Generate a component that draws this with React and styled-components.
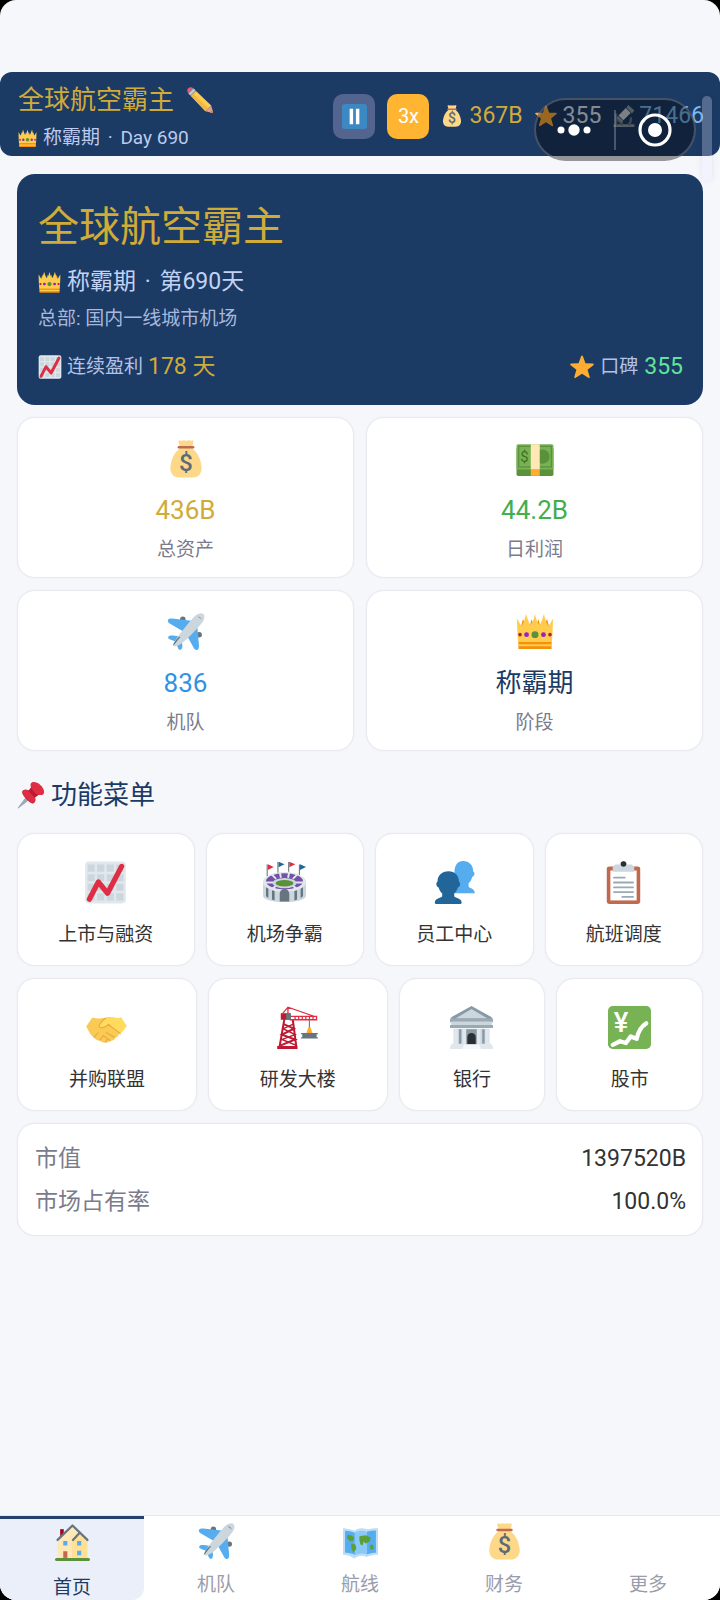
import React from 'react';
import styled, { createGlobalStyle, css } from 'styled-components';

const color = {
  page: '#f6f7fb',
  navy: '#1b3a64',
  gold: '#d0ab38',
  green: '#43ae50',
  blue: '#2f92e4',
  mint: '#5fe59a',
  pale: '#bccbef',
  muted: '#7a7b8d',
  ink: '#333333',
  line: '#e9eaef',
};

const GlobalStyle = createGlobalStyle`
  *, *::before, *::after { box-sizing: border-box; }
  html { background: #000; }
  body { margin: 0; font-family: Roboto, 'Noto Sans CJK SC', sans-serif; color: ${color.ink}; }
  h1, h2, p, dl, dt, dd { margin: 0; font-weight: 400; }
  button { font: inherit; color: inherit; border: 0; padding: 0; background: none; cursor: pointer; }
`;

/* ---------- icons ---------- */

const Svg = styled.svg`
  display: block;
  flex: none;
  width: ${(p) => p.$size}px;
  height: ${(p) => p.$size}px;
`;

const glyphs = {
  crown: (
    <>
      <path fill="#f4900c" d="M3 20 6.500 6 9 10 13 14 14.500 6 18 13 21.500 6 23 14 27 10 29.500 6 33 20z" />
      <path fill="#ffcc4d" d="M1 5.500C2.500 7.500 3.700 11 5.500 12.500 7.500 9 8.500 5 9.500 1c1.300 3.500 2.300 8 4.300 10.500C15.800 9 17.200 5 18 1c.8 4 2.200 8 4.200 10.500C24.200 9 25.200 4.500 26.500 1c1 4 2 8 4 11.500C32.300 11 33.500 7.500 35 5.500 35 13 34.500 22 34 28H2C1.500 22 1 13 1 5.500z" />
      <path fill="#f4900c" d="M2.300 27.500h31.400v6.500H2.300z" />
      <path fill="#ffcc4d" d="M2.300 29.500h31.400v2H2.300z" />
      <circle cx="18" cy="20.500" r="3.300" fill="#5c913b" />
      <circle cx="10" cy="20.500" r="2.300" fill="#9224c4" />
      <circle cx="26" cy="20.500" r="2.300" fill="#9224c4" />
      <circle cx="3.800" cy="20.500" r="1.700" fill="#be1931" />
      <circle cx="32.200" cy="20.500" r="1.700" fill="#be1931" />
    </>
  ),
  bag: (
    <>
      <path fill="#fdd888" d="M12 6 10.800 1.200c0-1.100 1.500-.9 2.700-.5C14.700 1 15 .4 16 .3s1.300.7 2.300.5c1-.1 1.700-.8 2.600-.5s1.300.6 2.300.3c1.100-.3 2.200-.3 2 .7L24 6v2c5 4 8 10 8.800 17.500.4 6-3 10-8.600 10H11.800c-5.600 0-9-4-8.600-10C4 18 7 12 12 8z" />
      <path fill="#bf6952" d="M11.200 5.700h13.600a1.150 1.150 0 0 1 0 2.300H11.200a1.150 1.150 0 0 1 0-2.300z" />
      <text x="18" y="29.500" textAnchor="middle" fontFamily="Roboto, sans-serif" fontSize="23" fontWeight="500" fill="#5f6b74">$</text>
    </>
  ),
  cash: (
    <>
      <rect x="0.500" y="7" width="35" height="27" rx="1.500" fill="#5c913b" />
      <rect x="0.500" y="4" width="35" height="24" rx="1.500" fill="#77b255" />
      <rect x="2.500" y="6" width="31" height="19.500" fill="none" stroke="#5c913b" strokeWidth="1.200" />
      <circle cx="25" cy="15.800" r="6.800" fill="#5c913b" />
      <path fill="#ffe8b6" d="M14 4h8.500v24H14z" />
      <path fill="#ffac33" d="M14 28h8.500v6H14z" />
      <text x="8" y="21" textAnchor="middle" fontFamily="Roboto, sans-serif" fontSize="14" fill="#3e721d">$</text>
    </>
  ),
  plane: (
    <>
      <circle cx="15" cy="6" r="2.600" fill="#66757f" />
      <circle cx="30.500" cy="20.500" r="2.600" fill="#66757f" />
      <path fill="#55acee" d="M1 6.500c.5-.9 2-1.300 4-1.200L25 7.500l-9.500 10L2.500 10C1 9 .4 7.600 1 6.500zM29 34.800c.9-.5 1.400-2 1.300-4L28.500 11l-10 9.500 7 12.800c1 1.500 2.400 2.100 3.500 1.500zM1.200 22.600c.8-1.200 2.500-1.500 4.600-1.200L14 22.600l-4 5.200-7-2.600c-1.500-.6-2.300-1.700-1.800-2.600zM13.200 34.700c1.200-.8 1.600-2.500 1.300-4.600L13 22.500l-5 4 2.400 6.600c.6 1.500 1.800 2.100 2.800 1.600z" />
      <path fill="#ccd6dd" d="M34.500.9c1.500 1.500 1.200 4.800-.8 7.700-2.400 3.600-14 15.900-18.800 19.400-3.200 2.300-6.900 4.500-8.300 3.300-1.300-1.300.9-5.100 3.300-8.300C13.300 18.200 23 6 26.700 2.600 29.500.2 33-.6 34.500.9z" />
      <path fill="#66757f" d="M5.500 31.200c.3-2 2.500-5.700 6-8.600.7-.5 1.300.2.700.8-2.700 2.800-4.400 6-6.700 7.800zM29 3.600c1.500-.5 3.500.9 3.600 2.900-.7-1.300-2-2.300-3.600-2.900z" />
    </>
  ),
  chart: (
    <>
      <rect x="1" y="0.500" width="34" height="35" rx="3" fill="#e1e8ed" />
      <path fill="#ccd6dd" d="M3 3h6v6H3zm8 0h6v6h-6zm8 0h6v6h-6zm8 0h6v6h-6zM3 11h6v6H3zm8 0h6v6h-6zm8 0h6v6h-6zm8 0h6v6h-6zM3 19h6v6H3zm8 0h6v6h-6zm8 0h6v6h-6zm8 0h6v6h-6zM3 27h6v6H3zm8 0h6v6h-6zm8 0h6v6h-6zm8 0h6v6h-6z" />
      <path fill="none" stroke="#dd2e44" strokeWidth="4.400" strokeLinecap="round" strokeLinejoin="round" d="M4.500 32 12 17.500l7.700 9.500L31.500 4.500" />
    </>
  ),
  star: (
    <path fill="#ffac33" d="M18 .8c.7 0 1.200.6 1.500 1.300l3.700 10.400 10.900.3c1.700.1 2.100 1.500.9 2.500l-8.600 6.700 3.100 10.700c.5 1.700-.7 2.600-2.100 1.600L18 28.100l-9.400 6.200c-1.400 1-2.600.1-2.100-1.600l3.100-10.700L1 15.300c-1.200-1-.8-2.400.9-2.500l10.900-.3 3.700-10.400C16.800 1.400 17.300.8 18 .8z" />
  ),
  pencil: (
    <>
      <path fill="#ea596e" d="M1.500 8.500 8.500 1.500 5.700.4C3-.4-.4 3 .4 5.700z" />
      <path fill="#99aab5" d="m1.500 8.500 7-7 4 4-7 7z" />
      <path fill="#ccd6dd" d="m2.800 9.800 7-7 1.300 1.300-7 7z" />
      <path fill="#ffcc4d" d="m5.500 12.500 7-7 21 20-8 8z" />
      <path fill="#f2b844" d="m5.500 12.500 3.300-3.300 20.800 20.300-4.100 4z" />
      <path fill="#e39f87" d="m25.500 33.500 8-8 2.300 8.500c.3 1.300-.6 2-1.800 1.800z" />
      <path fill="#c98571" d="m35.200 31.500.7 3c.2.900-.5 1.500-1.400 1.400l-3-.7z" />
    </>
  ),
  pause: (
    <>
      <rect width="36" height="36" rx="4" fill="#3b88c3" />
      <path fill="#fff" d="M11 7h5v22h-5zm9 0h5v22h-5z" />
    </>
  ),
  microscope: (
    <>
      <path fill="#8899a6" d="M1 31.500h34V36H1z" />
      <path fill="none" stroke="#66757f" strokeWidth="4" d="M5 14v19M4 20l12 12M29 20c1 5 0 9-4 13" />
      <path fill="#ccd6dd" d="m9 17 12-12 8 8-12 12z" />
      <path fill="#8899a6" d="m22 4 3-4 10 9-4 5zM8 18l9 8-3 3-8-8z" />
    </>
  ),
  pin: (
    <>
      <path fill="#99aab5" d="M12.500 19 1 34.300c-.4.800.3 1.300 1 .8L17 23.500z" />
      <path fill="#be1931" d="M7 13.200C9 10.500 13 11 16 13l6 6.500c2 3.500 2 7-.6 9-2.200 1.300-5.400-1-8.700-4.600C9 20 5.600 16 7 13.200z" />
      <path fill="#dd2e44" d="M7.300 12.500c2.500-2 5.900-1.300 8.600.5l6.500 6.700c2 3 2 6-.2 8-2.900 1-6-1.500-9.300-5-3.500-3.500-6.600-7-5.600-10.200z" />
      <path fill="#be1931" d="m14.500 13 5-7 10.500 10-7 5.500z" />
      <path fill="#dd2e44" d="M18 3C20 .4 25 .7 30 5c5 4.600 6 10 3.500 12.200-2.500 2-7.500.8-11.500-3.200C18 10 16.400 5.500 18 3z" />
    </>
  ),
  arena: (
    <>
      <path fill="none" stroke="#66757f" strokeWidth="0.900" d="M3.500 13V3M12.500 10V.800M21.500 10V.800M30.500 13V3" />
      <path fill="#dd2e44" d="m4 2.800 5 2.300-5 2.500zM22 .6l5 2.200-5 2.500z" />
      <path fill="#226699" d="m13 .6 5 2.200-5 2.500zM31 2.800l5 2.300-5 2.500z" />
      <path fill="#ccd6dd" d="M0 17h36v12c0 7-36 7-36 0z" />
      <ellipse cx="18" cy="17.500" rx="18" ry="8.300" fill="#e1e8ed" />
      <ellipse cx="18" cy="17" rx="15.500" ry="6.800" fill="#7450a8" />
      <path stroke="#e1e8ed" strokeWidth="1.600" d="m7 11 4 4m3-6 1 5m14-3-4 4m-3-6-1 5M2 18l7 0m25 0-7 0M8 23l4-3m16 3-4-3" />
      <ellipse cx="18" cy="18.500" rx="10" ry="4.300" fill="#ccd6dd" />
      <ellipse cx="18" cy="18.700" rx="7.500" ry="2.700" fill="#5c913b" />
      <path fill="#66757f" d="M14 34v-6c0-6 8-6 8 0v6zM2.500 22l2 1.200V31l-2-1.400zm5 2.500 2.200.7V33l-2.200-.7zm26-2.500-2 1.200V31l2-1.400zm-5 2.500-2.200.7V33l2.200-.7z" />
    </>
  ),
  people: (
    <>
      <path fill="#55acee" d="M25 0c5.500 0 8.600 3.700 8.600 8.300 0 .5 1.300.8 1.100 2.400-.2 1.500-.9 2.500-1.900 2.700-.8 2.800-1.800 4.100-3 5.300v2.500c0 1.700 5.200 1.500 5.200 5.800H18V8c.5-5 3-8 7-8z" />
      <path fill="#226699" d="M13 8.500c5.500 0 8.700 3.800 8.700 8.500 0 .6 1.200.8 1 2.400-.2 1.500-.9 2.500-1.900 2.700-.7 2.400-1.700 3.900-3 5v2.200c0 2 6.200 1.300 6.200 5.700 0 .6-.4 1-1 1H2.500c-.6 0-1-.4-1-1 0-4.400 6.200-3.700 6.200-5.700v-2.200c-1.300-1.100-2.300-2.600-3-5-1-.2-1.700-1.200-1.900-2.700-.2-1.600 1-1.800 1-2.400 0-4.700 3.400-8.500 9.200-8.500z" />
    </>
  ),
  clipboard: (
    <>
      <rect x="4" y="4.500" width="28" height="31.500" rx="2" fill="#c1694f" />
      <path fill="#fff" d="M7 8h22v25H7z" />
      <path fill="#ccd6dd" d="M11 3h4c0-4 6-4 6 0h4l2 2v4H9V5z" />
      <circle cx="18" cy="2.600" r="2.300" fill="#292f33" />
      <path stroke="#99aab5" strokeWidth="1.500" strokeLinecap="round" d="M10 14h9M10 18h16M10 22h16M10 26h16M17 30h9" />
    </>
  ),
  handshake: (
    <g transform="translate(1 3) scale(0.94 0.88)">
      <path fill="#f9ca55" d="M5.500 7.500 0 16c2 3 2.500 7 7 10.500 1 2.400 4 3 5 3 1.500 1.700 4 2 5 1.500 2 1 4-.3 4.500-1.500 2.500.4 4-1.200 4.200-3 2-.1 3.300-1.400 3.300-3.300C33 21 34 18 36 15.500l-5-8c-4 1-5 .5-8-.2-2.500-.5-4.500.2-5.500.7-5 0-6 1.500-12-.500z" />
      <path fill="#ffdc5d" d="m31 7.500 5 8c-2 2.500-3.500 5-5.500 7-4-3-8.500-6-10.500-8.500-3 3.500-7.500 4.500-8.500 2.500-.6-1.500 5-7.500 7.500-8.700 3-1.500 7 1.200 12-.3z" />
      <path fill="none" stroke="#eba83c" strokeWidth="1" strokeLinecap="round" d="M17.500 8c-2.500 1.500-6.400 6.500-6 8.300.7 2 5.500 1 8.500-2.300 2.500 3 7 5.500 10.500 9M7 26.500l3.500-4.500m1.500 7 3.500-4.500M17 31l2-3m-1-6 7.500 4.500M15.500 25l6 4.500" />
    </g>
  ),
  crane: (
    <>
      <path fill="none" stroke="#be1931" strokeWidth="1.700" d="M7 11 3 34M14 11l3 23M6 15l9 4-10 5 11 4-12 5" />
      <path fill="none" stroke="#be1931" strokeWidth="1.200" d="M15 15 6 19l10 5-11 4 12 5" />
      <path fill="#be1931" d="M1 33.500h17V36H1zM4 6h8v5.500H4z" />
      <path fill="none" stroke="#dd2e44" strokeWidth="1.100" d="M5 7 10 1l23 8M10 1v7M12 8.700h22v2.800H12zM16 9v2m3-2v2m3-2v2m3-2v2m3-2v2m3-2v2" />
      <path fill="#66757f" d="M8.500 6h4v5h-4zM27.500 12h.9v8h-.9zM21 22.500h14v1.200H34v2.500h1v1H21v-1h1v-2.500h-1z" />
      <path fill="#ffac33" d="M27 18h2l1.500 4.500h-5z" />
    </>
  ),
  bank: (
    <>
      <path fill="#ccd6dd" d="M3 19h30v14H3z" />
      <path fill="#8899a6" d="M1 9.500 18 0l17 9.500v2H1z" />
      <path fill="#ccd6dd" d="M4.500 10.500 18 2.500l13.500 8z" />
      <path fill="#99aab5" d="M0 10.500h36v3H0zM0 16h36v2.500H0z" />
      <path fill="#ccd6dd" d="M1 13h34v3H1z" />
      <path fill="#8899a6" d="M7.500 19.500h2V32h-2zM27 19.500h2V32h-2zM13.500 19.500h9V33h-9z" />
      <path fill="#e1e8ed" d="M3.500 19.500h3V32h-3zm7 0h3V32h-3zm12 0h3V32h-3zm7 0h3V32h-3zM1 31.500h12V34H1zm22 0h12V34H23zM0 33.500h36V36H0z" />
      <path fill="#292f33" d="M14.500 32v-6c0-4.500 7-4.500 7 0v6z" />
      <path fill="#f5f8fa" d="M12 32h12l2 4H10z" />
    </>
  ),
  yen: (
    <>
      <rect width="36" height="36" rx="4" fill="#77b255" />
      <text x="11" y="22" textAnchor="middle" fontFamily="Roboto, sans-serif" fontSize="23" fontWeight="500" fill="#fff">¥</text>
      <path fill="none" stroke="#fff" strokeWidth="3.600" strokeLinecap="round" strokeLinejoin="round" d="M4 32.500 10 29.500l5 1.500 4-5.500 5 2c1-5 3-10 8-13" />
    </>
  ),
  house: (
    <>
      <path fill="#a0041e" d="M6 5h3.500v9H6z" />
      <path fill="#ffe8b6" d="M3.500 15 18 1.500 32.500 15v19h-29z" />
      <path fill="#ffcc4d" d="M17.500 15 25 7.500 32.500 15v19h-15z" opacity=".3" />
      <path fill="none" stroke="#66757f" strokeWidth="2.200" strokeLinecap="round" strokeLinejoin="round" d="M3.500 15.500 18 1.500l14.500 14M18.500 15.500 25 8.500" />
      <path fill="#55acee" d="M9 16.500h4v4.500H9zM22.500 16.500h4v4.500h-4zM22.500 26h4v4.500h-4z" />
      <path fill="#c1694f" d="M9 26.500h4V33H9z" />
      <path fill="#5c913b" d="M2.500 33h31a1.500 1.500 0 0 1 0 3h-31a1.500 1.500 0 0 1 0-3z" />
    </>
  ),
  map: (
    <>
      <path fill="#bbddf5" d="M1 5c3 0 7 1 11.500 2.500C16 5 19 4.500 24 6c3.500-.5 7-1 11-1v26c-3 0-7 .5-11 2-5-2-8-1-12 1.500C8 32 4 31 1 31z" />
      <path fill="#55acee" d="M3 7.500c3 0 6 .8 9.500 2v21.500C9 29.500 6 29 3 29zM24 8.500c3-.8 6-1.200 9-1.200V29c-3 0-6 .6-9 1.700z" />
      <path fill="#88c9f9" d="M12.500 9.500c4-2 7-2.500 11.500-1v22c-4.500-1.500-7.500-1-11.500 1z" />
      <path fill="#5c9f35" d="M5 12c2-1 5 0 7 2l-1 3-3 1-3-3zM9 20l4 1 1 4-3 4-2-5zM17 13l6-1 5 2-1 4-4 2-2-2-1 4-2-1-1-4zM27 22l3-1 1 4-3 1z" />
    </>
  ),
};

const Icon = ({ name, size }) => (
  <Svg $size={size} viewBox="0 0 36 36" aria-hidden="true">{glyphs[name]}</Svg>
);

/* ---------- page frame ---------- */

const Page = styled.div`
  position: relative;
  display: flex;
  flex-direction: column;
  min-height: 100vh;
  padding-top: 72px;
  background: ${color.page};
  border-radius: 16px;
  overflow: hidden;
`;

const TopBar = styled.header`
  display: flex;
  justify-content: space-between;
  align-items: center;
  padding: 10px 16px 6px 18px;
  background: ${color.navy};
  border-radius: 12px;
`;

const Brand = styled.div`
  display: flex;
  flex-direction: column;
  gap: 8px;
`;

const Inline = styled.div`
  display: flex;
  align-items: center;
  gap: ${(p) => p.$gap || 6}px;
  white-space: nowrap;
`;

const BrandName = styled.h1`
  font-size: 26px;
  line-height: 36px;
  color: ${color.gold};
`;

const BrandMeta = styled.p`
  font-size: 19px;
  line-height: 24px;
  color: ${color.pale};
`;

const Dot = styled.span`
  margin: 0 3px;
`;

const Resources = styled.div`
  display: flex;
  align-items: center;
  gap: 12px;
`;

const SpeedButton = styled.button`
  display: flex;
  align-items: center;
  justify-content: center;
  width: 42px;
  height: 45px;
  border-radius: 10px;
  font-size: 20px;
  color: #fff;
  background: ${(p) => (p.$active ? '#ffb432' : '#53658e')};
`;

const Amount = styled.span`
  font-size: 23px;
  line-height: 32px;
  color: ${(p) => p.$color};
`;

const Capsule = styled.div`
  position: absolute;
  top: 98px;
  right: 24px;
  display: flex;
  align-items: center;
  width: 162px;
  height: 63px;
  border: 2px solid rgba(150, 150, 160, 0.4);
  border-radius: 32px;
  background: rgba(0, 0, 0, 0.4);
`;

const CapsuleButton = styled.button`
  flex: 1;
  display: flex;
  align-items: center;
  justify-content: center;
  height: 40px;

  & + & { border-left: 2px solid rgba(160, 165, 180, 0.4); }
`;

const ScrollThumb = styled.div`
  position: absolute;
  top: 96px;
  right: 8px;
  width: 10px;
  height: 85px;
  border-radius: 5px;
  background: rgba(232, 235, 255, 0.28);
  box-shadow: 0 0 6px rgba(60, 60, 120, 0.1);
`;

const Main = styled.main`
  flex: 1;
  display: flex;
  flex-direction: column;
  gap: 12px;
  padding: 18px 17px 24px;
`;

/* ---------- company summary ---------- */

const Hero = styled.section`
  padding: 25px 20px 22px 21px;
  border-radius: 18px;
  background: ${color.navy};
`;

const HeroTitle = styled.h2`
  font-size: 41px;
  line-height: 56px;
  color: ${color.gold};
`;

const HeroStage = styled(Inline)`
  margin-top: 11px;
  font-size: 23px;
  line-height: 32px;
  color: #c3d2f4;
`;

const HeroBase = styled.p`
  margin-top: 7px;
  font-size: 19px;
  line-height: 28px;
  color: #a9b7da;
`;

const HeroFoot = styled.div`
  display: flex;
  justify-content: space-between;
  margin-top: 18px;
`;

const FootLabel = styled.span`
  font-size: 19px;
  line-height: 32px;
  color: #b3c2e6;
`;

/* ---------- cards ---------- */

const card = css`
  background: #fff;
  border: 1px solid ${color.line};
  border-radius: 18px;
  box-shadow: 0 0 2px rgba(30, 30, 60, 0.06);
`;

const StatGrid = styled.section`
  display: grid;
  grid-template-columns: 1fr 1fr;
  gap: 12px;
`;

const StatCard = styled.div`
  ${card}
  display: flex;
  flex-direction: column;
  align-items: center;
  padding: 22px 12px 15px;
`;

const StatValue = styled.div`
  margin-top: 14px;
  font-size: 26px;
  line-height: 36px;
  color: ${(p) => p.$color};
`;

const StatLabel = styled.div`
  margin-top: 10px;
  font-size: 19px;
  line-height: 24px;
  color: ${color.muted};
`;

const SectionTitle = styled.h2`
  display: flex;
  align-items: center;
  gap: 6px;
  padding: 14px 0 8px;
  font-size: 26px;
  line-height: 36px;
  color: ${color.navy};
`;

const MenuRow = styled.div`
  display: flex;
  gap: 11px;
`;

const MenuButton = styled.button`
  && {
    ${card}
    flex: 1 1 auto;
    display: flex;
    flex-direction: column;
    align-items: center;
    gap: 19px;
    padding: 27px 0 18px;
    font-size: 19px;
    line-height: 24px;
    color: ${color.ink};
  }
`;

const MarketCard = styled.dl`
  ${card}
  padding: 13px 16px 12px 17px;
`;

const MarketRow = styled.div`
  display: flex;
  justify-content: space-between;
  font-size: 23px;
  line-height: 43px;
`;

const MarketName = styled.dt`
  color: ${color.muted};
`;

/* ---------- tab bar ---------- */

const TabBar = styled.nav`
  display: flex;
  align-items: stretch;
  border-top: 1px solid #e6e8f0;
  background: #fff;
`;

const Tab = styled.button`
  && {
    flex: 1 1 0;
    display: flex;
    flex-direction: column;
    align-items: center;
    gap: 12px;
    padding-top: 7px;
    font-size: 19px;
    line-height: 24px;
    color: #9b9cab;
    ${(p) => p.$active && css`
      gap: 14px;
      padding-top: 5px;
      border-top: 3px solid #24416f;
      border-radius: 0 0 12px 0;
      color: ${color.navy};
      background: #ebeffa;
    `}
  }
`;

const TabIcon = styled.span`
  display: flex;
  height: 38px;
`;

const stats = [
  { icon: 'bag', value: '436B', label: '总资产', tone: color.gold },
  { icon: 'cash', value: '44.2B', label: '日利润', tone: color.green },
  { icon: 'plane', value: '836', label: '机队', tone: color.blue },
  { icon: 'crown', value: '称霸期', label: '阶段', tone: color.navy },
];

const menu = [
  [['chart', '上市与融资'], ['arena', '机场争霸'], ['people', '员工中心'], ['clipboard', '航班调度']],
  [['handshake', '并购联盟'], ['crane', '研发大楼'], ['bank', '银行'], ['yen', '股市']],
];

const market = [['市值', '1397520B'], ['市场占有率', '100.0%']];

const tabs = [['house', '首页'], ['plane', '机队'], ['map', '航线'], ['bag', '财务'], [null, '更多']];

export default function App() {
  return (
    <>
      <GlobalStyle />
      <Page>
        <TopBar>
          <Brand>
            <Inline $gap={13}>
              <BrandName>全球航空霸主</BrandName>
              <Icon name="pencil" size={26} />
            </Inline>
            <Inline>
              <Icon name="crown" size={19} />
              <BrandMeta>称霸期 <Dot>·</Dot> Day 690</BrandMeta>
            </Inline>
          </Brand>
          <Resources>
            <SpeedButton aria-label="暂停"><Icon name="pause" size={25} /></SpeedButton>
            <SpeedButton $active>3x</SpeedButton>
            <Inline><Icon name="bag" size={22} /><Amount $color={color.gold}>367B</Amount></Inline>
            <Inline><Icon name="star" size={22} /><Amount $color="#dfe6f5">355</Amount></Inline>
            <Inline $gap={4}><Icon name="microscope" size={22} /><Amount $color="#7db8ee">71466</Amount></Inline>
          </Resources>
        </TopBar>

        <Main>
          <Hero>
            <HeroTitle>全球航空霸主</HeroTitle>
            <HeroStage><Icon name="crown" size={23} /><p>称霸期 <Dot>·</Dot> 第690天</p></HeroStage>
            <HeroBase>总部: 国内一线城市机场</HeroBase>
            <HeroFoot>
              <Inline $gap={5}>
                <Icon name="chart" size={24} />
                <FootLabel>连续盈利</FootLabel>
                <Amount $color={color.gold}>178 天</Amount>
              </Inline>
              <Inline>
                <Icon name="star" size={24} />
                <FootLabel>口碑</FootLabel>
                <Amount $color={color.mint}>355</Amount>
              </Inline>
            </HeroFoot>
          </Hero>

          <StatGrid>
            {stats.map((s) => (
              <StatCard key={s.label}>
                <Icon name={s.icon} size={38} />
                <StatValue $color={s.tone}>{s.value}</StatValue>
                <StatLabel>{s.label}</StatLabel>
              </StatCard>
            ))}
          </StatGrid>

          <SectionTitle><Icon name="pin" size={28} />功能菜单</SectionTitle>

          {menu.map((row) => (
            <MenuRow key={row[0][0]}>
              {row.map(([icon, label]) => (
                <MenuButton key={label}>
                  <Icon name={icon} size={43} />
                  {label}
                </MenuButton>
              ))}
            </MenuRow>
          ))}

          <MarketCard>
            {market.map(([name, value]) => (
              <MarketRow key={name}>
                <MarketName>{name}</MarketName>
                <dd>{value}</dd>
              </MarketRow>
            ))}
          </MarketCard>
        </Main>

        <TabBar>
          {tabs.map(([icon, label], i) => (
            <Tab key={label} $active={i === 0} aria-current={i === 0 ? 'page' : undefined}>
              <TabIcon>{icon && <Icon name={icon} size={37} />}</TabIcon>
              {label}
            </Tab>
          ))}
        </TabBar>

        <Capsule>
          <CapsuleButton aria-label="更多操作">
            <svg width="36" height="12" viewBox="0 0 36 12" fill="#fff" aria-hidden="true">
              <circle cx="4" cy="6" r="3.500" />
              <circle cx="17" cy="6" r="5.700" />
              <circle cx="30" cy="6" r="3.500" />
            </svg>
          </CapsuleButton>
          <CapsuleButton aria-label="关闭">
            <svg width="34" height="34" viewBox="0 0 34 34" aria-hidden="true">
              <circle cx="17" cy="17" r="15" fill="none" stroke="#fff" strokeWidth="3.200" />
              <circle cx="17" cy="17" r="7" fill="#fff" />
            </svg>
          </CapsuleButton>
        </Capsule>
        <ScrollThumb />
      </Page>
    </>
  );
}
